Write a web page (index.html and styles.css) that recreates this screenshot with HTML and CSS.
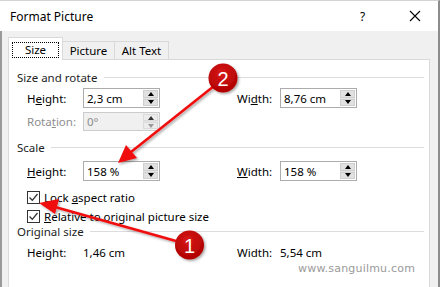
FILE: index.html
```html
<!DOCTYPE html>
<html>
<head>
<title>Format Picture</title>
<link rel="stylesheet" href="styles.css">
</head>
<body>
<div class="window">
  <div class="titlebar">
    <span class="title">Format Picture</span>
    <span class="help">?</span>
    <span class="close">
      <svg width="12" height="12" viewBox="0 0 12 12"><path d="M1 1 L11 11 M11 1 L1 11" stroke="#000" stroke-width="1.1" fill="none"/></svg>
    </span>
  </div>

  <div class="main">
    <div class="tabs">
      <div class="tab active"><span class="focus">Size</span></div>
      <div class="tab">Picture</div>
      <div class="tab">Alt Text</div>
    </div>

    <div class="panel">
      <div class="group">
        <div class="legend"><span>Size and rotate</span></div>
        <div class="row">
          <label>H<u>e</u>ight:</label>
          <div class="spin"><span class="val">2,3 cm</span><span class="arrows"><b class="up"></b><b class="down"></b></span></div>
          <span></span>
          <label>Wi<u>d</u>th:</label>
          <div class="spin"><span class="val">8,76 cm</span><span class="arrows"><b class="up"></b><b class="down"></b></span></div>
        </div>
        <div class="row second">
          <label class="off">Rota<u>t</u>ion:</label>
          <div class="spin disabled"><span class="val">0°</span><span class="arrows"><b class="up"></b><b class="down"></b></span></div>
        </div>
      </div>

      <div class="group scale">
        <div class="legend"><span>Scale</span></div>
        <div class="row">
          <label><u>H</u>eight:</label>
          <div class="spin"><span class="val">158 %</span><span class="arrows"><b class="up"></b><b class="down"></b></span></div>
          <span></span>
          <label><u>W</u>idth:</label>
          <div class="spin"><span class="val">158 %</span><span class="arrows"><b class="up"></b><b class="down"></b></span></div>
        </div>
        <div class="check first"><span class="box"><svg width="11" height="11" viewBox="0 0 11 11"><path d="M1.5 5.5 L4.3 8.3 L9.5 2" stroke="#333" stroke-width="1.3" fill="none"/></svg></span><span>Lock <u>a</u>spect ratio</span></div>
        <div class="check"><span class="box"><svg width="11" height="11" viewBox="0 0 11 11"><path d="M1.5 5.5 L4.3 8.3 L9.5 2" stroke="#333" stroke-width="1.3" fill="none"/></svg></span><span><u>R</u>elative to original picture size</span></div>
      </div>

      <div class="group original">
        <div class="legend"><span>Original size</span></div>
        <div class="row info">
          <label>Height:</label>
          <span>1,46 cm</span>
          <span></span>
          <label>Width:</label>
          <span>5,54 cm</span>
        </div>
        <div class="watermark">www.sanguilmu.com</div>
      </div>
    </div>
  </div>
</div>

<svg class="callouts" width="440" height="287" viewBox="0 0 440 287">
  <defs>
    <filter id="shade" x="-20%" y="-20%" width="140%" height="140%">
      <feDropShadow dx="1.5" dy="1.5" stdDeviation="1" flood-color="#000" flood-opacity="0.35"/>
    </filter>
    <radialGradient id="ball" cx="45%" cy="35%" r="65%">
      <stop offset="0" stop-color="#d81818"/>
      <stop offset="1" stop-color="#b00000"/>
    </radialGradient>
  </defs>
  <g filter="url(#shade)">
    <line x1="214" y1="86" x2="131" y2="152" stroke="#f01010" stroke-width="2.6"/>
    <polygon points="118,163 126,145 137,158" fill="#f01010"/>
    <line x1="176" y1="241" x2="55" y2="207" stroke="#f01010" stroke-width="2.6"/>
    <polygon points="39,203 59,199 55,214" fill="#f01010"/>
    <circle cx="223" cy="78" r="14.5" fill="url(#ball)"/>
    <circle cx="189.5" cy="245" r="14.5" fill="url(#ball)"/>
  </g>
  <text x="223" y="85.5" class="num">2</text>
  <text x="189.5" y="252.5" class="num">1</text>
</svg>
</body>
</html>
```

FILE: styles.css
```css
body {
    margin: 0;
    width: 440px;
    height: 287px;
    overflow: hidden;
    position: relative;
    font-family: "Noto Sans", "Open Sans", sans-serif;
    font-size: 11.5px;
    color: #000;
    background: #fff;
}

u {
    text-decoration: underline;
    text-underline-offset: 1px;
}

.window {
    height: 287px;
    border-right: 2px solid #8c8c8c;
    border-top: 1px solid #d4d4d4;
    box-sizing: border-box;
    display: flex;
    flex-direction: column;
}

/* title */
.titlebar {
    height: 30px;
    display: flex;
    align-items: center;
    background: #fff;
}

.title {
    padding-left: 10px;
    font-size: 12px;
    flex: 1;
}

.help {
    width: 12px;
    margin-right: 37px;
    font-size: 12px;
}

.close {
    width: 12px;
    height: 12px;
    margin-right: 17px;
    margin-top: -1px;
}

/* body of the dialog */
.main {
    flex: 1;
    background: #f0f0f0;
    border-left: 2px solid #9a9a9a;
    padding: 6px 8px 0 6px;
    display: flex;
    flex-direction: column;
}

.tabs {
    display: flex;
    align-items: flex-end;
    height: 22px;
    position: relative;
    z-index: 1;
}

.tab {
    height: 18px;
    line-height: 17px;
    padding: 0;
    white-space: nowrap;
    border: 1px solid #d9d9d9;
    border-bottom: none;
    border-left: none;
    box-sizing: border-box;
    background: #f0f0f0;
    text-align: center;
}

.tab:nth-child(2) {
    width: 52px;
}

.tab:nth-child(3) {
    width: 54px;
}

.tab.active {
    width: 55px;
    height: 23px;
    margin-bottom: -1px;
    border-left: 1px solid #d9d9d9;
    background: #fff;
    padding: 4px 3px 0;
}

.focus {
    display: block;
    height: 16px;
    line-height: 14px;
    border: 1px dotted #000;
    box-sizing: border-box;
}

.panel {
    flex: 1;
    background: #fff;
    border: 1px solid #d9d9d9;
    border-bottom: none;
    padding: 9px 5px 0 8px;
}

.legend {
    display: flex;
    align-items: center;
    height: 16px;
    color: #1e1e1e;
}

.legend span {
    padding-right: 6px;
}

.legend::after {
    content: "";
    flex: 1;
    height: 1px;
    background: #dcdcdc;
}

.row {
    display: grid;
    grid-template-columns: 56px 77px 77px 43px 77px;
    align-items: center;
    padding-left: 10px;
    margin-top: 3px;
    height: 20px;
}

.row.second {
    margin-top: 4px;
    height: 18px;
}

.off {
    color: #8d8d8d;
}

.spin {
    height: 20px;
    border: 1px solid #acacac;
    box-sizing: border-box;
    display: flex;
    align-items: center;
    background: #fff;
}

.second .spin {
    height: 19px;
}

.val {
    flex: 1;
    padding-left: 3px;
}

.arrows {
    width: 15px;
    align-self: stretch;
    margin: 1px;
    display: flex;
    flex-direction: column;
    background: #e5e5e5;
    gap: 1px;
}

.arrows b {
    flex: 1;
    display: flex;
    align-items: center;
    justify-content: center;
    background: #e1e1e1;
    border: 1px solid #cfcfcf;
}

.arrows b::before {
    content: "";
    border-left: 3.5px solid transparent;
    border-right: 3.5px solid transparent;
}

.arrows .up::before {
    border-bottom: 4px solid #000;
}

.arrows .down::before {
    border-top: 4px solid #000;
}

.disabled {
    background: #f0f0f0;
    border-color: #cccccc;
    color: #8d8d8d;
}

.disabled .arrows b {
    background: #ececec;
    border-color: #dadada;
}

.disabled .up::before {
    border-bottom-color: #333;
}

.disabled .down::before {
    border-top-color: #999;
}

.scale {
    margin-top: 9px;
}

.scale .row {
    margin-top: 6px;
    height: 19px;
}

.check {
    display: flex;
    align-items: center;
    height: 18px;
    padding-left: 10px;
    margin-top: 1px;
}

.check.first {
    margin-top: 8px;
}

.box {
    width: 13px;
    height: 13px;
    border: 1px solid #333;
    box-sizing: border-box;
    margin-right: 4px;
    display: flex;
    align-items: center;
    justify-content: center;
}

.original {
    margin-top: -2px;
}

.info {
    margin-top: 4px;
    height: 18px;
}

.watermark {
    margin-top: 1px;
    padding-left: 281px;
    font-family: "DejaVu Sans", sans-serif;
    font-size: 11px;
    color: #9a9a9a;
    letter-spacing: 0.2px;
}

/* red numbered callouts over the dialog */
.callouts {
    position: absolute;
    left: 0;
    top: 0;
}

.num {
    fill: #fff;
    font-family: "Liberation Sans", sans-serif;
    font-size: 20px;
    text-anchor: middle;
}
```
